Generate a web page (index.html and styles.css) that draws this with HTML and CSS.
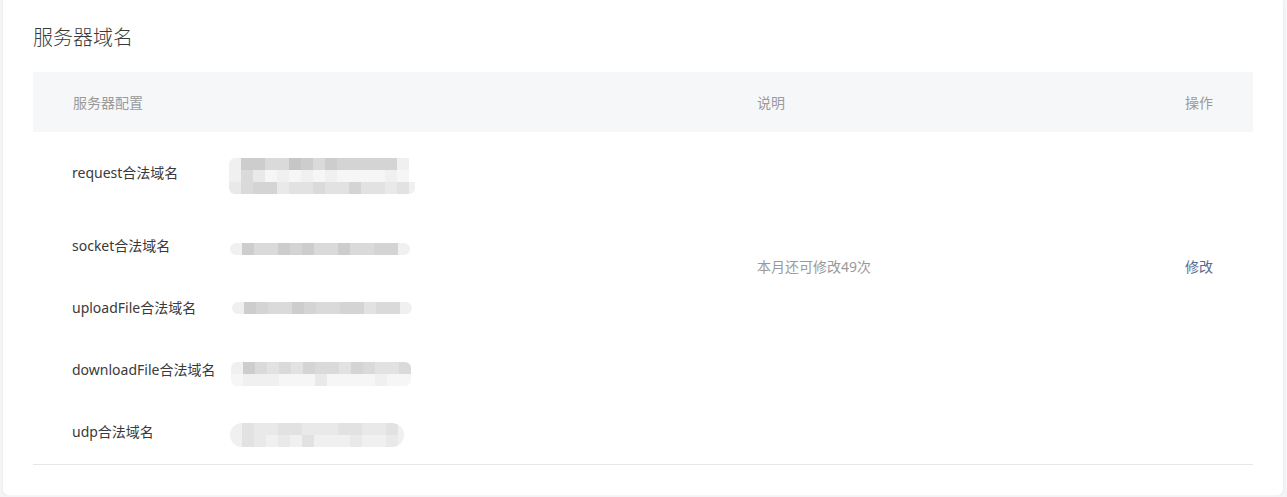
FILE: index.html
```html
<!DOCTYPE html>
<html lang="zh-CN">
<head>
<meta charset="utf-8">
<title>服务器域名</title>
<link rel="stylesheet" href="styles.css">
</head>
<body>
<div class="card">
  <h2 class="title">服务器域名</h2>
  <div class="table">
    <div class="thead">
      <div class="th th-config">服务器配置</div>
      <div class="th th-desc">说明</div>
      <div class="th th-op">操作</div>
    </div>
    <div class="tbody">
      <div class="td td-config">
        <div class="item item-request">
          <span class="label">request合法域名</span>
          <div class="blur blur-request">
            <div class="brow"><i class="g7"></i><i class="g2"></i><i class="g2"></i><i class="g4"></i><i class="g4"></i><i class="g1"></i><i class="g2"></i><i class="g4"></i><i class="g2"></i><i class="g3"></i><i class="g3"></i><i class="g3"></i><i class="g3"></i><i class="g3"></i><i class="g7"></i></div>
            <div class="brow"><i class="g7"></i><i class="g4"></i><i class="g6"></i><i class="g8"></i><i class="g7"></i><i class="g8"></i><i class="g7"></i><i class="g8"></i><i class="g7"></i><i class="g8"></i><i class="g8"></i><i class="g8"></i><i class="g8"></i><i class="g7"></i><i class="g8"></i></div>
            <div class="brow"><i class="g6"></i><i class="g4"></i><i class="g3"></i><i class="g3"></i><i class="g6"></i><i class="g5"></i><i class="g5"></i><i class="g4"></i><i class="g5"></i><i class="g5"></i><i class="g3"></i><i class="g5"></i><i class="g5"></i><i class="g6"></i><i class="g5"></i><i class="g7 half"></i></div>
          </div>
        </div>
        <div class="item item-socket">
          <span class="label">socket合法域名</span>
          <div class="blur blur-socket">
            <div class="brow"><i class="g7"></i><i class="g2"></i><i class="g4"></i><i class="g4"></i><i class="g2"></i><i class="g3"></i><i class="g2"></i><i class="g4"></i><i class="g4"></i><i class="g2"></i><i class="g4"></i><i class="g4"></i><i class="g3"></i><i class="g3"></i><i class="g7"></i></div>
          </div>
        </div>
        <div class="item item-upload">
          <span class="label">uploadFile合法域名</span>
          <div class="blur blur-upload">
            <div class="brow"><i class="g7"></i><i class="g2"></i><i class="g3"></i><i class="g4"></i><i class="g4"></i><i class="g2"></i><i class="g3"></i><i class="g4"></i><i class="g4"></i><i class="g3"></i><i class="g3"></i><i class="g5"></i><i class="g4"></i><i class="g4"></i><i class="g7"></i></div>
          </div>
        </div>
        <div class="item item-download">
          <span class="label">downloadFile合法域名</span>
          <div class="blur blur-download">
            <div class="brow"><i class="g7"></i><i class="g2"></i><i class="g4"></i><i class="g5"></i><i class="g4"></i><i class="g5"></i><i class="g3"></i><i class="g4"></i><i class="g4"></i><i class="g5"></i><i class="g3"></i><i class="g4"></i><i class="g5"></i><i class="g5"></i><i class="g4"></i></div>
            <div class="brow"><i class="g8"></i><i class="g7"></i><i class="g7"></i><i class="g7"></i><i class="g8"></i><i class="g8"></i><i class="g8"></i><i class="g6"></i><i class="g8"></i><i class="g8"></i><i class="g8"></i><i class="g8"></i><i class="g7"></i><i class="g8"></i><i class="g8"></i></div>
          </div>
        </div>
        <div class="item item-udp">
          <span class="label">udp合法域名</span>
          <div class="blur blur-udp">
            <div class="brow"><i class="g7"></i><i class="g5"></i><i class="g6"></i><i class="g6"></i><i class="g5"></i><i class="g5"></i><i class="g6"></i><i class="g6"></i><i class="g6"></i><i class="g5"></i><i class="g5"></i><i class="g6"></i><i class="g6"></i><i class="g5"></i><i class="g7 half"></i></div>
            <div class="brow"><i class="g7"></i><i class="g5"></i><i class="g6"></i><i class="g7"></i><i class="g6"></i><i class="g7"></i><i class="g5"></i><i class="g7"></i><i class="g7"></i><i class="g7"></i><i class="g6"></i><i class="g7"></i><i class="g7"></i><i class="g6"></i><i class="g7 half"></i></div>
          </div>
        </div>
      </div>
      <div class="td td-desc">本月还可修改49次</div>
      <div class="td td-op"><a class="link" href="#">修改</a></div>
    </div>
  </div>
</div>
</body>
</html>
```

FILE: styles.css
```css
html, body {
  margin: 0;
  padding: 0;
}
body {
  background: #f3f4f6;
  font-family: "Noto Sans", "Noto Sans CJK SC", sans-serif;
  color: #353535;
}
.card {
  margin: 0 4px 0 3px;
  height: 495px;
  box-sizing: border-box;
  background: #ffffff;
  border-radius: 0 0 5px 5px;
  box-shadow: 0 1px 2px rgba(0, 0, 0, 0.08);
  padding: 24px 30px 0 30px;
}
.title {
  margin: 0 0 20px 0;
  font-size: 20px;
  line-height: 28px;
  font-weight: 300;
  color: #3a3a3a;
}
.table {
  border-bottom: 1px solid #e4e6e9;
}
.thead, .tbody {
  display: grid;
  grid-template-columns: 684px 1fr 160px;
}
.thead {
  background: #f6f7f9;
  height: 60px;
  align-items: center;
}
.th {
  font-size: 14px;
  color: #9a9a9a;
  padding-left: 40px;
}
.th-op, .td-op {
  padding-left: 0;
  padding-right: 40px;
  text-align: right;
}
.tbody {
  padding: 29px 0 20px 0;
}
.td {
  font-size: 14px;
}
.td-desc {
  padding-left: 40px;
  padding-top: 94px;
  color: #9a9a9a;
  line-height: 24px;
}
.td-op {
  padding-top: 94px;
  line-height: 24px;
}
.link {
  color: #576b95;
  text-decoration: none;
}
.td-config {
  padding-left: 39px;
  display: flex;
  flex-direction: column;
}
.item {
  display: flex;
  align-items: flex-start;
  height: 62px;
}
.item-request {
  height: 73px;
}
.item-udp {
  height: 24px;
}
.label {
  width: 157px;
  flex: none;
  line-height: 24px;
  color: #3a3a3a;
}
.blur {
  display: flex;
  flex-direction: column;
  border-radius: 6px;
  overflow: hidden;
}
.blur-request { margin-top: -3px; }
.blur-socket { margin-top: 9px; margin-left: 1px; }
.blur-upload { margin-top: 6px; margin-left: 3px; }
.blur-download { margin-top: 4px; margin-left: 2px; }
.blur-udp { margin-top: 3px; margin-left: 1px; border-radius: 12px; }
.brow {
  display: flex;
  height: 12px;
}
.brow i {
  display: block;
  width: 12px;
  height: 12px;
  flex: none;
}
.brow i.half { width: 6px; }
.g1 { background: #c6c6c6; }
.g2 { background: #cdcdcd; }
.g3 { background: #d4d4d4; }
.g4 { background: #dadada; }
.g5 { background: #e2e2e2; }
.g6 { background: #e9e9e9; }
.g7 { background: #f0f0f0; }
.g8 { background: #f6f6f6; }
```
